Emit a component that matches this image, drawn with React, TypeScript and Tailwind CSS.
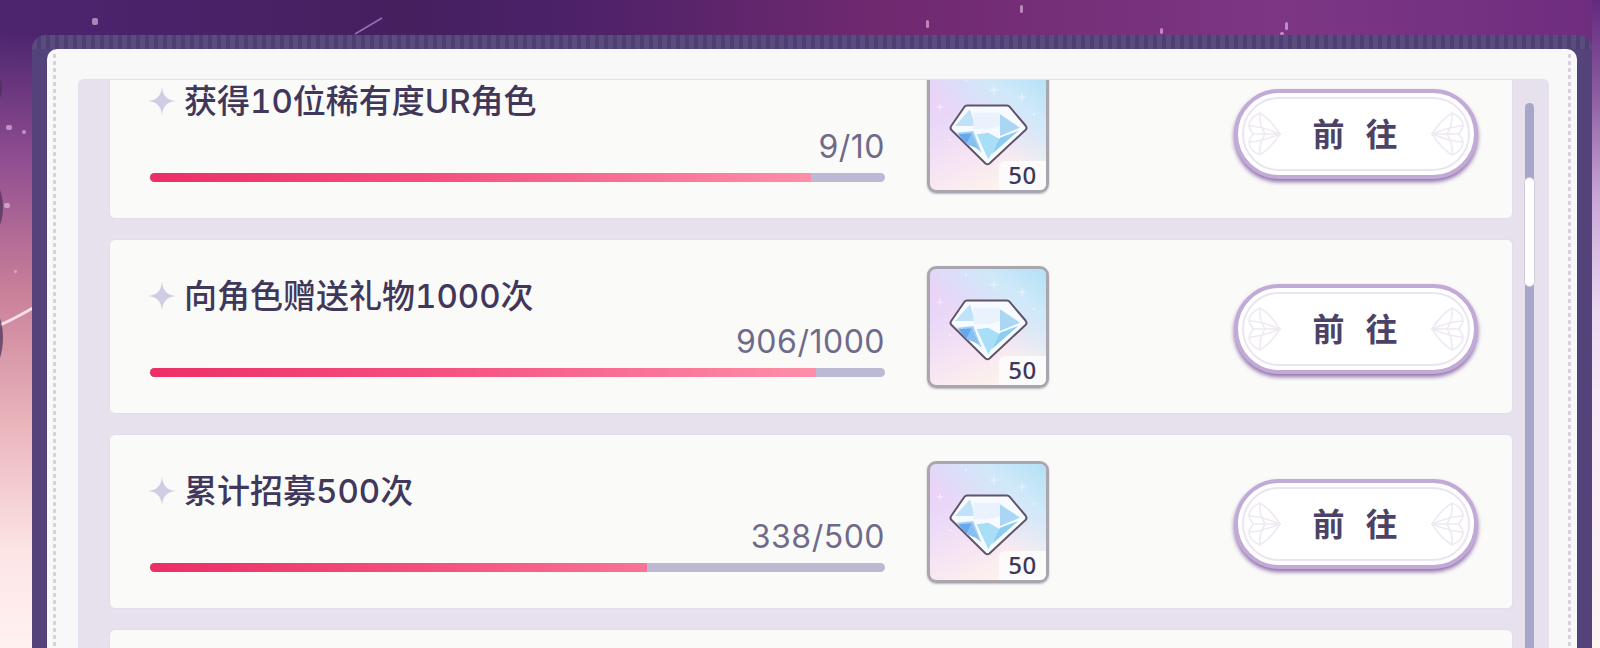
import React from "react";

const font = "font-[family-name:'Noto_Sans','Noto_Sans_CJK_SC',sans-serif]";
const titleFont = "font-[family-name:'Inter','Noto_Sans_CJK_SC',sans-serif]";

const tasks = [
  { title: "获得10位稀有度UR角色", value: "9/10", fill: 661 },
  { title: "向角色赠送礼物1000次", value: "906/1000", fill: 666 },
  { title: "累计招募500次", value: "338/500", fill: 497 },
];

function Star() {
  return (
    <svg width="28" height="28" viewBox="0 0 28 28" className="-ml-[2px] shrink-0">
      <path d="M14 0 C15 9 19 13 28 14 C19 15 15 19 14 28 C13 19 9 15 0 14 C9 13 13 9 14 0 Z" fill="#cfcce3" />
    </svg>
  );
}

function Diamond() {
  return (
    <svg width="79" height="62" viewBox="0 0 79 62" className="block">
      <path d="M18 1.5 H58 Q59.5 1.5 60.5 2.7 L76.5 21.5 Q78.5 24 76.5 26 L40.5 59.5 Q38.5 61 36.5 59.5 L2.5 26 Q0.5 24 2.5 21.5 L15.5 2.7 Q16.5 1.5 18 1.5 Z" fill="#f7fbff" stroke="#5f5468" strokeWidth="2" strokeLinejoin="round" />
      <path d="M6 22 L21 5.3 L26 22 Z" fill="#bfe2f8" />
      <path d="M7.7 28.7 L24.3 27 L32.7 48.7 Z" fill="#a5d1f4" />
      <path d="M24.3 8.7 H51 V22 L39.3 25.3 H24.3 Z" fill="#e9f2fd" />
      <path d="M51 10.3 L71 23.7 L51 32 Z" fill="#a9d6f4" />
      <path d="M27.7 30.3 L39.3 55.3 L51 35.3 L39.3 28.7 Z" fill="#a8def6" />
      <path d="M42.7 50.3 L69.3 27 L51 33.7 Z" fill="#8ccdf0" />
      <path d="M9.3 30.3 L22.7 29.3 L17.7 40.3 Z" fill="#66a8ee" />
      <path d="M17.7 40.3 L22.7 29.3 L30 45 Z" fill="#86bff0" />
    </svg>
  );
}

function Reward() {
  return (
    <div className="relative flex h-[122px] w-[122px] shrink-0 justify-center overflow-hidden rounded-[9px] border-[3px] border-[#aaa6ae] bg-[linear-gradient(155deg,#eccdf6_0%,#e9d8f8_32%,#f6e3f4_58%,#fffbe6_100%)] pt-[30px] shadow-[0_1px_2px_#b9b4c0]">
      <div className="absolute inset-0 bg-[linear-gradient(218deg,#b4e0f6_0%,#cfe9f9_24%,rgba(225,235,250,0)_55%)]" />
      <svg className="absolute inset-0" width="116" height="116" viewBox="0 0 116 116" fill="#ffffff" opacity="0.4">
        <path d="M64 10 l1 5 5 1 -5 1 -1 5 -1 -5 -5 -1 5 -1 Z" />
        <path d="M10 28 l1 4 4 1 -4 1 -1 4 -1 -4 -4 -1 4 -1 Z" />
        <path d="M92 18 l1 4 4 1 -4 1 -1 4 -1 -4 -4 -1 4 -1 Z" />
        <circle cx="36" cy="6" r="1.2" />
        <circle cx="104" cy="40" r="1.2" />
        <circle cx="20" cy="66" r="1.2" />
      </svg>
      <div className="relative">
        <Diamond />
      </div>
      <div className={`absolute right-0 bottom-0 flex h-[29px] w-[47px] items-center justify-center rounded-tl-[6px] bg-[#fbfbfb] text-[24px] leading-none font-medium tracking-[0.5px] text-[#40375a] ${font}`}>
        50
      </div>
    </div>
  );
}

function Wing({ flip }: { flip?: boolean }) {
  return (
    <svg width="34" height="44" viewBox="0 0 34 44" className={flip ? "-scale-x-100" : ""} fill="none" stroke="#eee9f3" strokeWidth="1.6">
      <path d="M13 1 C6 4 2 9 2 14 C2 18 6 20 6 22 C6 24 2 26 2 30 C2 35 6 40 13 43 C21 38 28 30 33 22 C28 14 21 6 13 1 Z" />
      <path d="M6 22 H33 M2 14 C12 14 23 18 33 22 C23 26 12 30 2 30 M13 1 C12 8 14 15 18 22 C14 29 12 36 13 43" />
    </svg>
  );
}

function GoButton() {
  return (
    <div className="mt-[5px] flex h-[90px] w-[244px] shrink-0 rounded-full border-[4px] border-[#c2aad6] bg-white p-[4px] shadow-[0_3px_4px_#8f70ab]">
      <div className={`flex flex-1 items-center justify-between rounded-full border-2 border-[#ebe5f1] px-[3px] text-[#4c4265] ${font}`}>
        <Wing />
        <span className="-ml-[2px] flex gap-[21px] text-[32px] leading-none font-bold">
          <span>前</span>
          <span>往</span>
        </span>
        <Wing flip />
      </div>
    </div>
  );
}

function TaskCard({ title, value, fill }: { title: string; value: string; fill: number }) {
  return (
    <div className="flex h-[175px] shrink-0 items-center rounded-[6px] border border-[#e2dcec] bg-[#fafaf8] pr-[34px] pl-[40px]">
      <div className={`flex h-full w-[735px] shrink-0 flex-col pt-[36px] ${font}`}>
        <div className={`flex h-[40px] items-center gap-[8px] text-[33px] leading-none font-medium tabular-nums text-[#40375a] ${titleFont}`}>
          <Star />
          <span>{title}</span>
        </div>
        <div className={`mt-[4px] h-[43px] text-right text-[32px] leading-[44px] tracking-[0.5px] text-[#6f6a8a] ${titleFont}`}>{value}</div>
        <div className="mt-[5px] h-[9px] rounded-full bg-[#bcb9d4]">
          <div
            className="h-full rounded-l-full bg-[linear-gradient(90deg,#ec2f66_0%,#f4527f_40%,#ff9ab1_100%)] bg-[length:735px_100%] bg-no-repeat"
            style={{ width: fill }}
          />
        </div>
      </div>
      <div className="ml-[42px]">
        <Reward />
      </div>
      <div className="ml-auto">
        <GoButton />
      </div>
    </div>
  );
}

function DotStrip() {
  return <div className="mt-[5px] w-[3px] shrink-0 bg-[repeating-linear-gradient(180deg,#d6d2df_0px,#d6d2df_4px,transparent_4px,transparent_7px)]" />;
}

function Backdrop() {
  return (
    <svg className="absolute inset-0 blur-[0.6px]" width="1600" height="648" viewBox="0 0 1600 648" fill="none">
      <path d="M355 34 L382 18" stroke="#9a6cbc" strokeWidth="1.5" />
      <path d="M0 325 C12 320 22 314 33 308" stroke="#f6dfe6" strokeWidth="3" />
      <path d="M0 78 C3 85 3 92 0 98 Z M0 190 C4 200 4 215 0 225 Z M0 318 C4 330 4 345 0 358 Z" fill="#4a3058" opacity="0.7" />
      <g fill="#e8c8e8" opacity="0.6">
        <rect x="92" y="18" width="6" height="7" rx="2" />
        <rect x="6" y="125" width="6" height="5" rx="2" />
        <rect x="4" y="203" width="6" height="5" rx="2" />
        <rect x="22" y="130" width="4" height="4" rx="2" />
        <rect x="14" y="270" width="3" height="3" rx="1.5" />
        <rect x="926" y="20" width="3" height="8" rx="1.5" />
        <rect x="1020" y="5" width="3" height="8" rx="1.5" />
        <rect x="1285" y="22" width="3" height="8" rx="1.5" />
        <rect x="1160" y="28" width="3" height="6" rx="1.5" />
        <rect x="1280" y="32" width="4" height="3" rx="1.5" />
      </g>
    </svg>
  );
}

export default function App() {
  return (
    <div className="relative h-[648px] w-full overflow-hidden bg-[linear-gradient(90deg,#4c2570_0%,#44205f_25%,#4b2168_35%,#70296f_55%,#7c3684_80%,#6f2d80_100%)]">
      <div className="absolute inset-0 bg-[linear-gradient(180deg,rgba(150,80,150,0)_5%,#8f4c90_24%,#c98099_45%,#e9b4bb_65%,#fde4e5_85%,#fff2f0_100%)]" />
      <div className="absolute top-0 right-0 bottom-0 w-[8px] bg-[linear-gradient(180deg,#63297f_0%,#8a5a9e_14%,#c8a4d6_30%,#ecd8f0_48%,#f9e8f4_62%,#fdf4f0_100%)]" />
      <Backdrop />
      <div className="relative flex h-full flex-col pt-[35px] pr-[8px] pl-[32px]">
        <div className="flex flex-1 flex-col overflow-hidden rounded-t-[14px] bg-[#54437a] bg-[repeating-linear-gradient(90deg,#5a4c7e_0px,#5a4c7e_5px,#4e3f72_5px,#4e3f72_9px)] bg-[length:100%_14px] bg-no-repeat px-[15px] pt-[14px]">
          <div className="flex flex-1 overflow-hidden rounded-t-[10px] bg-[#f8f8f8] pr-[6px] pl-[6px]">
            <DotStrip />
            <div className="flex min-w-0 flex-1 flex-col pt-[30px] pr-[19px] pl-[22px]">
              <div className="flex flex-1 overflow-hidden rounded-t-[6px] border-t border-[#e4e0ea] bg-[#e6e1ec] pl-[31px]">
                <div className="-mt-[36px] flex w-[1404px] shrink-0 flex-col gap-[20px]">
                  {tasks.map((t) => (
                    <TaskCard key={t.title} {...t} />
                  ))}
                  <div className="h-[175px] shrink-0 rounded-[6px] border border-[#e2dcec] bg-[#fafaf8]" />
                </div>
                <div className="mt-[23px] ml-[12px] w-[9px] shrink-0 rounded-t-full bg-[#a5a6c9] pt-[74px]">
                  <div className="-mx-[1px] h-[110px] rounded-full border border-[#cfcbda] bg-white" />
                </div>
              </div>
            </div>
            <DotStrip />
          </div>
        </div>
      </div>
    </div>
  );
}
